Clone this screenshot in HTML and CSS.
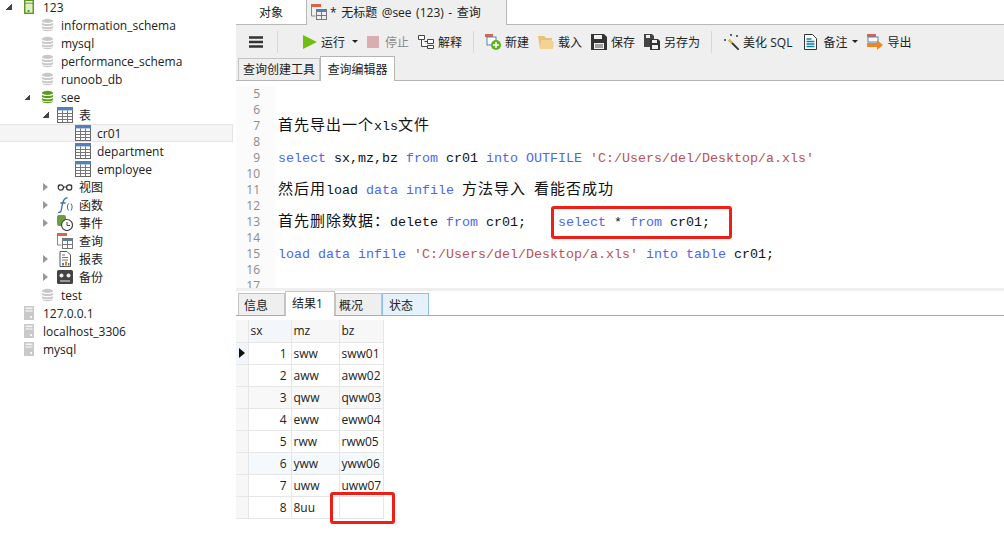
FILE: index.html
```html
<!DOCTYPE html>
<html lang="zh">
<head>
<meta charset="utf-8">
<title>Navicat</title>
<link rel="stylesheet" href="styles.css">
</head>
<body>
<svg class="defs" width="0" height="0">
  <defs>
    <symbol id="db" viewBox="0 0 14 14"><ellipse cx="7" cy="2.6" rx="6" ry="2.2" fill="currentColor"/><path d="M1 4.6c1 1.8 11 1.8 12 0v2.2c-1 1.8-11 1.8-12 0zM1 8c1 1.8 11 1.8 12 0v2.2c-1 1.8-11 1.8-12 0zM1 11.2c1 1.6 11 1.6 12 0v.4c-1 2.8-11 2.8-12 0z" fill="currentColor"/></symbol>
    <symbol id="tbl" viewBox="0 0 16 16"><rect x=".5" y=".5" width="15" height="15" fill="#fff" stroke="#666"/><rect y="0" width="16" height="3.4" fill="#4f81bd"/><path d="M.5 6.5h15M.5 9.5h15M.5 12.5h15M5.5 3.5v12M10.5 3.5v12" stroke="#777" fill="none"/></symbol>
    <symbol id="srv" viewBox="0 0 10 14"><rect width="10" height="14" fill="#c9c9c9"/><rect x="1.5" y="1.5" width="7" height="1.6" fill="#f4f4f4"/><rect x="1.5" y="4.4" width="7" height="1.2" fill="#f4f4f4"/><rect x="6" y="10" width="2" height="2" fill="#f4f4f4"/></symbol>
    <symbol id="query" viewBox="0 0 16 16"><rect x="0" y="0" width="10" height="3" fill="#d9644a"/><path d="M.5 3v9h4" fill="none" stroke="#888"/><rect x="5" y="5" width="11" height="3" fill="#4f81bd"/><rect x="5.5" y="5.5" width="10" height="10" fill="none" stroke="#777"/><path d="M10.5 8v7M5.5 11.5h10" stroke="#777"/></symbol>
  </defs>
</svg>
<div class="app">
  <aside class="tree">
    <div class="row l0"><i class="arrow open"></i><svg class="ic srv green" viewBox="0 0 10 14"><rect width="10" height="14" fill="#5a9a1e"/><rect x="1.5" y="1" width="7" height="1.6" fill="#fff"/><rect x="1.5" y="3.6" width="7" height="9" fill="#dff0c8"/><rect x="3.5" y="10" width="2" height="2" fill="#5a9a1e"/></svg><span>123</span></div>
    <div class="row l1"><i class="arrow none"></i><svg class="ic dbi"><use href="#db"/></svg><span>information_schema</span></div>
    <div class="row l1"><i class="arrow none"></i><svg class="ic dbi"><use href="#db"/></svg><span>mysql</span></div>
    <div class="row l1"><i class="arrow none"></i><svg class="ic dbi"><use href="#db"/></svg><span>performance_schema</span></div>
    <div class="row l1"><i class="arrow none"></i><svg class="ic dbi"><use href="#db"/></svg><span>runoob_db</span></div>
    <div class="row l1"><i class="arrow open"></i><svg class="ic dbi on"><use href="#db"/></svg><span>see</span></div>
    <div class="row l2"><i class="arrow open"></i><svg class="ic t16"><use href="#tbl"/></svg><span>表</span></div>
    <div class="row l3 sel"><i class="arrow none"></i><svg class="ic t16"><use href="#tbl"/></svg><span>cr01</span></div>
    <div class="row l3"><i class="arrow none"></i><svg class="ic t16"><use href="#tbl"/></svg><span>department</span></div>
    <div class="row l3"><i class="arrow none"></i><svg class="ic t16"><use href="#tbl"/></svg><span>employee</span></div>
    <div class="row l2"><i class="arrow closed"></i><svg class="ic t16" viewBox="0 0 16 16"><circle cx="3.8" cy="8.5" r="2.6" fill="none" stroke="#333" stroke-width="1.2"/><circle cx="12.2" cy="8.5" r="2.6" fill="none" stroke="#333" stroke-width="1.2"/><path d="M6.4 8h3.2M1 7l1-1.5M15 7l-1-1.5" stroke="#333" fill="none"/></svg><span>视图</span></div>
    <div class="row l2"><i class="arrow closed"></i><svg class="ic t16" viewBox="0 0 16 16"><path d="M1 15.500c3 .5 3.500-2 4-6.500S7.500.500 10.500 1M3.500 6h5" fill="none" stroke="#3a6ea5" stroke-width="1.300"/><path d="M11.500 6.500c-1.500 2-1.500 5 0 7M14 6.500c1.500 2 1.500 5 0 7" fill="none" stroke="#3a6ea5"/></svg><span>函数</span></div>
    <div class="row l2"><i class="arrow closed"></i><svg class="ic t16" viewBox="0 0 16 16"><rect x="0" y="0" width="9" height="11" rx="2" fill="#6a9e3f"/><circle cx="10" cy="10" r="5.500" fill="#fff" stroke="#444" stroke-width="1.200"/><path d="M10 7v3.500h3" stroke="#444" fill="none"/></svg><span>事件</span></div>
    <div class="row l2"><i class="arrow none"></i><svg class="ic t16"><use href="#query"/></svg><span>查询</span></div>
    <div class="row l2"><i class="arrow closed"></i><svg class="ic t16" viewBox="0 0 16 16"><path d="M3 .500h7l3.500 3.500v11.500H3z" fill="#fff" stroke="#555"/><path d="M5 4h3M5 6.500h6M5 9h6" stroke="#777"/><rect x="5" y="12" width="2" height="2.500" fill="#4f81bd"/><rect x="8" y="10.500" width="2" height="4" fill="#e0862a"/><rect x="11" y="12" width="1.500" height="2.500" fill="#4f81bd"/></svg><span>报表</span></div>
    <div class="row l2"><i class="arrow closed"></i><svg class="ic t16" viewBox="0 0 16 16"><rect width="16" height="14" y="1" rx="1.500" fill="#444"/><circle cx="4.500" cy="6.500" r="2" fill="#eee"/><circle cx="11.500" cy="6.500" r="2" fill="#eee"/><rect x="3" y="11" width="10" height="2" fill="#999"/></svg><span>备份</span></div>
    <div class="row l1"><i class="arrow none"></i><svg class="ic dbi"><use href="#db"/></svg><span>test</span></div>
    <div class="row l0"><i class="arrow none"></i><svg class="ic srv"><use href="#srv"/></svg><span>127.0.0.1</span></div>
    <div class="row l0"><i class="arrow none"></i><svg class="ic srv"><use href="#srv"/></svg><span>localhost_3306</span></div>
    <div class="row l0"><i class="arrow none"></i><svg class="ic srv"><use href="#srv"/></svg><span>mysql</span></div>
  </aside>
  <main class="main">
    <div class="doc-tabs">
      <div class="doc-tab plain">对象</div>
      <div class="doc-tab active"><svg class="ic t16"><use href="#query"/></svg><span>* 无标题 @see (123) - 查询</span></div>
      <div class="doc-rest"></div>
    </div>
    <div class="toolbar">
      <svg class="burger" viewBox="0 0 14 12"><path d="M0 1.500h14M0 6h14M0 10.500h14" stroke="#333" stroke-width="2.400"/></svg>
      <i class="sep first"></i>
      <div class="tool run"><svg class="ic14" viewBox="0 0 14 14"><path d="M0 0l14 7-14 7z" fill="#6fbf0e"/></svg><span>运行</span><i class="caret"></i></div>
      <div class="tool off"><svg class="ic12" viewBox="0 0 12 12"><rect width="12" height="12" fill="#d9aeb0"/></svg><span>停止</span></div>
      <div class="tool"><svg class="ic16" viewBox="0 0 16 16"><path d="M.5 1.500h6v4h-6zM9.500 5.500h6v4h-6zM9.500 11.500h6v3h-6zM3.500 5.500v7h6M6.500 7.500h3" fill="#fff" stroke="#444"/></svg><span>解释</span></div>
      <i class="sep"></i>
      <div class="tool"><svg class="ic16" viewBox="0 0 16 16"><rect x="0" y="0" width="8" height="3" fill="#d9644a"/><rect x="2" y="3" width="9" height="8" fill="#fff" stroke="#4f81bd"/><circle cx="11" cy="11" r="5" fill="#5cb31c"/><path d="M11 8v6M8 11h6" stroke="#fff" stroke-width="1.500"/></svg><span>新建</span></div>
      <div class="tool"><svg class="ic16" viewBox="0 0 16 16"><path d="M0 2h6l2 2h6v11H2z" fill="#e8c27c"/><path d="M3 6h10l3 2-1 7H2z" fill="#f3d391"/></svg><span>载入</span></div>
      <div class="tool"><svg class="ic16" viewBox="0 0 16 16"><path d="M0 0h13l3 3v13H0z" fill="#333"/><rect x="3" y="1" width="8" height="4" fill="#eee"/><rect x="3" y="9" width="10" height="6" fill="#eee"/><path d="M4 11h8M4 13h8" stroke="#555"/></svg><span>保存</span></div>
      <div class="tool"><svg class="ic16" viewBox="0 0 16 16"><path d="M0 0h8l2 2v5H6v6H0z" fill="#444"/><rect x="2" y="1" width="4" height="3" fill="#eee"/><path d="M6 5h8l2 2v9H6z" fill="#333"/><rect x="8" y="6" width="5" height="3" fill="#eee"/><rect x="8" y="11" width="6" height="4" fill="#eee"/></svg><span>另存为</span></div>
      <i class="sep"></i>
      <div class="tool"><svg class="ic16" viewBox="0 0 16 16"><path d="M6 6l10 10" stroke="#333" stroke-width="1.800"/><path d="M6 6l3 3" stroke="#e7c534" stroke-width="2"/><path d="M1 6h2M2 5v2M7 1h2M8 0v2M13 2h2M14 1v2" stroke="#333"/></svg><span>美化 SQL</span></div>
      <div class="tool note"><svg class="ic16 narrow" viewBox="0 0 13 16"><path d="M.500.500h8l4 4v11H.500z" fill="#fff" stroke="#333"/><path d="M2.500 5h5M2.500 7.500h8M2.500 10h8M2.500 12.500h8" stroke="#0e7fa8" stroke-width="1.300"/></svg><span>备注</span><i class="caret"></i></div>
      <div class="tool"><svg class="ic16" viewBox="0 0 16 16"><rect x="0" y="0" width="9" height="3" fill="#d9644a"/><rect x="1" y="3" width="10" height="5" fill="#fff" stroke="#4f81bd"/><path d="M0 9h10V6l6 5-6 5v-3H0z" fill="#f0861e"/></svg><span>导出</span></div>
    </div>
    <div class="sub-tabs">
      <div class="sub-tab">查询创建工具</div>
      <div class="sub-tab current">查询编辑器</div>
    </div>
    <section class="editor">
      <div class="ln"><b>5</b><code></code></div>
      <div class="ln"><b>6</b><code></code></div>
      <div class="ln"><b>7</b><code><span class="zh">首先导出一个</span>xls<span class="zh">文件</span></code></div>
      <div class="ln"><b>8</b><code></code></div>
      <div class="ln"><b>9</b><code><span class="kw">select</span> sx,mz,bz <span class="kw">from</span> cr01 <span class="kw">into</span> <span class="kw">OUTFILE</span> <span class="str">'C:/Users/del/Desktop/a.xls'</span></code></div>
      <div class="ln"><b>10</b><code></code></div>
      <div class="ln"><b>11</b><code><span class="zh">然后用</span>load <span class="kw">data</span> <span class="kw">infile</span> <span class="zh">方法导入</span> <span class="zh">看能否成功</span></code></div>
      <div class="ln"><b>12</b><code></code></div>
      <div class="ln"><b>13</b><code><span class="zh">首先删除数据：</span>delete <span class="kw">from</span> cr01;    <span class="kw">select</span> * <span class="kw">from</span> cr01;</code></div>
      <div class="ln"><b>14</b><code></code></div>
      <div class="ln"><b>15</b><code><span class="kw">load</span> <span class="kw">data</span> <span class="kw">infile</span> <span class="str">'C:/Users/del/Desktop/a.xls'</span> <span class="kw">into</span> <span class="kw">table</span> cr01;</code></div>
      <div class="ln"><b>16</b><code></code></div>
      <div class="ln"><b>17</b><code></code></div>
      <div class="mark mark-sql"></div>
    </section>
    <div class="res-tabs">
      <div class="res-tab">信息</div>
      <div class="res-tab current">结果1</div>
      <div class="res-tab tight">概况</div>
      <div class="res-tab hover">状态</div>
    </div>
    <section class="results">
      <table class="grid">
        <thead><tr><th class="ind"></th><th class="sx">sx</th><th class="mz">mz</th><th class="bz">bz</th></tr></thead>
        <tbody>
          <tr class="first"><td class="ind"><i class="ptr"></i></td><td class="num">1</td><td>sww</td><td>sww01</td></tr>
          <tr><td class="ind"></td><td class="num">2</td><td>aww</td><td>aww02</td></tr>
          <tr class="alt"><td class="ind"></td><td class="num">3</td><td>qww</td><td>qww03</td></tr>
          <tr><td class="ind"></td><td class="num">4</td><td>eww</td><td>eww04</td></tr>
          <tr><td class="ind"></td><td class="num">5</td><td>rww</td><td>rww05</td></tr>
          <tr class="tint"><td class="ind"></td><td class="num">6</td><td>yww</td><td>yww06</td></tr>
          <tr><td class="ind"></td><td class="num">7</td><td>uww</td><td>uww07</td></tr>
          <tr><td class="ind"></td><td class="num">8</td><td>8uu</td><td></td></tr>
        </tbody>
      </table>
      <div class="mark mark-cell"></div>
    </section>
  </main>
</div>
</body>
</html>
```
FILE: styles.css
```css
* { box-sizing: border-box; }
html, body { margin: 0; height: 100%; overflow: hidden; background: #fff; }
body { font: 12px "Open Sans", "Noto Sans CJK SC", sans-serif; color: #222; }
.defs { position: absolute; }
.app { display: flex; height: 553px; width: 1004px; }

.tree { width: 236px; flex: none; margin-top: -2px; }
.row { display: flex; align-items: center; height: 18px; white-space: nowrap; }
.row span { margin-left: 6px; }
.l0 { padding-left: 5px; }
.l1 { padding-left: 23px; }
.l2 { padding-left: 41px; }
.l3 { padding-left: 57px; }
.sel { background: #f5f5f5; border: 1px solid #e4e4e4; border-left: 0; width: 233px; }
.arrow { width: 9px; height: 9px; margin-right: 9px; flex: none; display: block; }
.arrow.open { background: linear-gradient(135deg, transparent 50%, #444 50%); width: 6px; height: 6px; margin: 0 11px 0 1px; }
.arrow.closed { width: 0; height: 0; border-left: 5px solid #999; border-top: 4.5px solid transparent; border-bottom: 4.5px solid transparent; margin: 0 9px 0 2px; }
.l2 .arrow.open { margin: 0 8px 0 2px; }
.l2 .arrow.none { margin-right: 7px; }
.ic { flex: none; display: block; }
.srv { width: 10px; height: 14px; margin: 0 3px 0 1px; }
.dbi { width: 13px; height: 14px; color: #c8c8c8; }
.dbi.on { color: #5a9e1c; }
.t16 { width: 16px; height: 16px; }
.l1 span { margin-left: 7px; }

.main { flex: 1; min-width: 0; display: flex; flex-direction: column; }
.doc-tabs { display: flex; height: 25px; flex: none; }
.doc-tab { display: flex; align-items: center; height: 25px; }
.doc-tab.plain { width: 71px; justify-content: center; background: #fff; border-bottom: 1px solid #b8b8b8; border-right: 1px solid #b8b8b8; }
.doc-tab.active { width: 199px; padding: 0 0 1px 4px; background: #efefef; gap: 3px; word-spacing: 1.400px; }
.doc-rest { flex: 1; border-left: 1px solid #b8b8b8; border-bottom: 1px solid #b8b8b8; }

.toolbar { display: flex; align-items: center; gap: 9px; height: 32px; flex: none; padding: 1px 0 0 13px; background: #efefef; }
.burger { width: 14px; height: 12px; }
.sep { width: 1px; height: 22px; background: #d8d8d8; margin: 0 2px; display: block; }
.sep.first { margin: 0 16px 0 5px; }
.tool { display: flex; align-items: center; gap: 4px; white-space: nowrap; }
.tool.off span { color: #8a8a8a; }
.ic14 { width: 14px; height: 14px; }
.ic12 { width: 12px; height: 12px; margin-right: 2px; }
.ic16 { width: 16px; height: 16px; }
.ic16.narrow { width: 13px; margin-right: 2px; }
.tool.note { margin-left: 3px; }
.caret { width: 0; height: 0; border-left: 3px solid transparent; border-right: 3px solid transparent; border-top: 3px solid #222; margin-left: 1px; display: block; }
.tool.run .caret { margin-left: 3px; }

.sub-tabs { display: flex; align-items: flex-end; height: 24px; flex: none; padding-left: 2px; background: #efefef; border-bottom: 1px solid #b5b5b5; }
.sub-tab { height: 22px; width: 82px; padding-bottom: 1px; display: flex; align-items: center; justify-content: center; border: 1px solid #c4c4c4; border-bottom: 0; background: #efefef; }
.sub-tab.current { height: 25px; width: 75px; background: #fff; border-color: #b5b5b5; margin-bottom: -1px; position: relative; }

.editor { position: relative; height: 207px; flex: none; overflow: hidden; background: #fff; padding-top: 5px; }
.ln { display: flex; height: 16px; }
.ln b { width: 39px; flex: none; padding-right: 15px; text-align: right; font: 12px/16px "Open Sans", sans-serif; color: #8a8a8a; background: #fbfbfb; }
.ln code { margin-left: 3px; padding-top: 1px; font: 13.33px/16px "Liberation Mono", "Noto Sans CJK SC", monospace; color: #111; white-space: pre; }
.zh { font-size: 15px; line-height: 0; letter-spacing: 1px; font-family: "Noto Sans CJK SC", sans-serif; }
.kw { color: #4d66ee; }
.str { color: #c0504d; }
.mark { position: absolute; border: 3px solid #f01e14; border-radius: 3px; }
.mark-sql { left: 315px; top: 125px; width: 181px; height: 33px; }

.res-tabs { display: flex; align-items: flex-end; height: 28px; flex: none; padding-left: 2px; background: linear-gradient(#efefef 3px, #fff 3px); border-bottom: 1px solid #aaa; }
.res-tab { width: 47px; height: 22px; padding-left: 5px; display: flex; align-items: center; background: #efefef; border: 1px solid #c4c4c4; border-bottom: 0; }
.res-tab.current { width: 50px; height: 25px; padding: 0 0 2px 6px; background: #fff; margin-bottom: -1px; position: relative; }
.res-tab.tight { padding-left: 3px; }
.res-tab.hover { padding-left: 6px; background: #e5f1fb; border: 1px solid #8fbfe8; border-bottom: 0; }

.results { position: relative; flex: 1; padding-top: 4px; }
.grid { border-collapse: collapse; table-layout: fixed; width: 147px; }
.grid th, .grid td { height: 22px; padding: 0 2px; border: 1px solid #e6e6e6; border-top: 0; border-left: 0; font-weight: 400; text-align: left; overflow: hidden; white-space: nowrap; }
.grid th { background: #f7f7f7; }
.grid th.sx { background: #f3f7fc; }
.ind { width: 12px; background: #f7f7f7; }
.grid td.ind { padding: 0; }
.sx { width: 43px; }
.mz { width: 48px; }
.bz { width: 44px; }
.grid td.num { text-align: right; padding-right: 4px; }
.first .ind { background: #f1f6fc; }
.alt td { background: #f8f8f8; }
.tint td { background: #f4f9fd; }
.alt td.ind, .tint td.ind { background: #f7f7f7; }
.ptr { display: block; width: 0; height: 0; margin-left: 3px; border-left: 6px solid #111; border-top: 5px solid transparent; border-bottom: 5px solid transparent; }
.mark-cell { left: 94px; top: 176px; width: 65px; height: 32px; }
```
